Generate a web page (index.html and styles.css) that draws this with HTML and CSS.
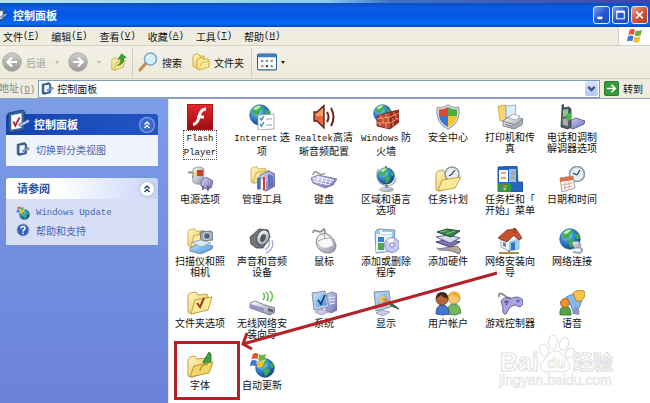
FILE: index.html
```html
<!DOCTYPE html>
<html lang="zh-CN">
<head>
  <meta charset="UTF-8" />
  <meta name="viewport" content="width=device-width, initial-scale=1.0"/>
  <title>控制面板</title>
  <link rel="stylesheet" href="styles.css">
</head>
<body>

<!-- Shared icon parts -->
<svg class="defs" aria-hidden="true">
  <defs>
    <radialGradient id="sea" cx="0.35" cy="0.3" r="0.8">
      <stop offset="0" stop-color="#a8e4fb"/><stop offset="0.45" stop-color="#2f86d0"/><stop offset="1" stop-color="#0b3478"/>
    </radialGradient>
    <linearGradient id="paper" x1="0" y1="0" x2="1" y2="1">
      <stop offset="0" stop-color="#fff9c4"/><stop offset="1" stop-color="#e9bd45"/>
    </linearGradient>
    <linearGradient id="metal" x1="0" y1="0" x2="1" y2="1">
      <stop offset="0" stop-color="#ffffff"/><stop offset="1" stop-color="#8e93a4"/>
    </linearGradient>
    <linearGradient id="lilac" x1="0" y1="0" x2="1" y2="1">
      <stop offset="0" stop-color="#dcdcfa"/><stop offset="1" stop-color="#6a68b4"/>
    </linearGradient>
    <linearGradient id="screen" x1="0" y1="0" x2="1" y2="1">
      <stop offset="0" stop-color="#c6e6ff"/><stop offset="1" stop-color="#3f8fe0"/>
    </linearGradient>
    <linearGradient id="red" x1="0" y1="0" x2="0" y2="1">
      <stop offset="0" stop-color="#e3262b"/><stop offset="1" stop-color="#9c0d10"/>
    </linearGradient>
    <linearGradient id="disc" x1="0" y1="0" x2="0" y2="1">
      <stop offset="0" stop-color="#cfcfcb"/><stop offset="1" stop-color="#979793"/>
    </linearGradient>
    <symbol id="globe" viewBox="0 0 20 20">
      <circle cx="10" cy="10" r="9.3" fill="url(#sea)" stroke="#2a5f95" stroke-width="0.7"/>
      <path d="M4 4Q7 1 11 1.5L13 4L10 6L9 9L6 10L3 8ZM8 11L13 10L15 13L12 17L10 18L9 14ZM14 5L18 6L18.5 10L16 10Z" fill="#3fae4c"/>
      <path d="M4 4Q7 1 11 1.5L9 4L6 6Z" fill="#b6efaa"/>
    </symbol>
    <symbol id="folder" viewBox="0 0 26 24">
      <path d="M1 21V4L3 2L9 1L11 4L20 3L21 5V18L4 23Z" fill="url(#paper)" stroke="#b58e2c" stroke-width="0.8"/>
      <path d="M4 23L8 9L25 6L21 19Z" fill="#fdeb98" stroke="#b58e2c" stroke-width="0.8"/>
    </symbol>
    <symbol id="panel" viewBox="0 0 24 24">
      <path d="M2 4L16 1L18 3V20L4 23L2 21Z" fill="#33639f" stroke="#16396f" stroke-width="0.8"/>
      <path d="M5 6L15 4V18L5 20Z" fill="#fff"/>
      <path d="M7 12L9 16L13 8" fill="none" stroke="#c3252b" stroke-width="1.8"/>
      <path d="M12 15L21 10L23 11L22 13L14 17Z" fill="#a8c8ee" stroke="#24497f" stroke-width="0.7"/>
    </symbol>
    <symbol id="panel-small" viewBox="0 0 24 24">
      <path d="M2 4L15 1L18 4V20L5 23L2 21Z" fill="#3b618f" stroke="#26466f"/>
      <path d="M6 6L15 5V18L6 19Z" fill="#eef5fc"/>
      <path d="M11 15L20 9L23 12L14 17Z" fill="#8fb1dc" stroke="#26466f"/>
    </symbol>
    <symbol id="flag" viewBox="0 0 20 18">
      <path d="M4 2Q7 0 10 2L8.700 8Q6 6 2.500 8Z" fill="#e8552b"/>
      <path d="M11 2.500Q14 4 18 2L16.500 8Q13 10 9.700 8.500Z" fill="#6db33a"/>
      <path d="M2.200 9.200Q5.500 7.500 8.400 9.300L7 15Q4 13.500 .8 15Z" fill="#3f78d8"/>
      <path d="M9.400 9.800Q12.500 11 16.200 9.300L14.600 15.500Q11 17.500 8 15.500Z" fill="#f5be2c"/>
    </symbol>
    <symbol id="chevrons" viewBox="0 0 14 14">
      <path d="M4.500 6.500L7 4L9.500 6.500M4.500 10L7 7.500L9.500 10" fill="none" stroke="currentColor" stroke-width="1.4"/>
    </symbol>
  </defs>
</svg>

<div class="window">
  <div class="backdrop"></div>

  <header class="title-bar">
    <svg class="title-icon"><use href="#panel-small"/></svg>
    <h1>控制面板</h1>
    <div class="window-buttons">
      <button type="button" aria-label="最小化"><svg viewBox="0 0 18 18"><path d="M4 12.500H10" stroke="#fff" stroke-width="3"/></svg></button>
      <button type="button" aria-label="最大化"><svg viewBox="0 0 18 18"><path d="M4.500 5V13.500H13.500V5" fill="none" stroke="#fff" stroke-width="1.300"/><path d="M4 5H14" stroke="#fff" stroke-width="2.600"/></svg></button>
      <button type="button" class="close" aria-label="关闭"><svg viewBox="0 0 18 18"><path d="M5 5L13 13M13 5L5 13" stroke="#fff" stroke-width="2"/></svg></button>
    </div>
  </header>

  <nav class="menu-bar">
    <div class="menus">
      <button type="button">文件<span class="en">(<u>F</u>)</span></button>
      <button type="button">编辑<span class="en">(<u>E</u>)</span></button>
      <button type="button">查看<span class="en">(<u>V</u>)</span></button>
      <button type="button">收藏<span class="en">(<u>A</u>)</span></button>
      <button type="button">工具<span class="en">(<u>T</u>)</span></button>
      <button type="button">帮助<span class="en">(<u>H</u>)</span></button>
    </div>
    <div class="flag-box"><svg><use href="#flag"/></svg></div>
  </nav>

  <div class="toolbar">
    <button type="button" class="back" disabled>
      <svg class="round" viewBox="0 0 20 20"><circle cx="10" cy="10" r="9.300" fill="url(#disc)" stroke="#a5a5a0" stroke-width="0.800"/><path d="M15 10H6M10 5.500L5.500 10L10 14.500" fill="none" stroke="#fff" stroke-width="2.200"/></svg>
      后退
    </button>
    <span class="caret off"></span>
    <button type="button" class="forward" aria-label="前进" disabled>
      <svg class="round" viewBox="0 0 20 20"><circle cx="10" cy="10" r="9.300" fill="url(#disc)" stroke="#a5a5a0" stroke-width="0.800"/><path d="M5 10H14M10 5.500L14.500 10L10 14.500" fill="none" stroke="#fff" stroke-width="2.200"/></svg>
    </button>
    <span class="caret off"></span>
    <button type="button" class="up" aria-label="向上">
      <svg viewBox="0 0 18 20"><path d="M1 18V7L6 5L8 7L14 6V15L4 19Z" fill="url(#paper)" stroke="#b99735" stroke-width="0.700"/><path d="M4 19L6 11L16 8L13 16Z" fill="#fdee9d" stroke="#b99735" stroke-width="0.700"/><path d="M7 14Q12 12 11 6L8 7L12 1L17 5L14 5.500Q15 13 7 14Z" fill="#35a52c" stroke="#1b7420" stroke-width="0.700"/></svg>
    </button>
    <span class="separator"></span>
    <button type="button" class="search">
      <svg class="round" viewBox="0 0 20 20"><path d="M8 11L2 18" stroke="#c98752" stroke-width="3" stroke-linecap="round"/><circle cx="12.500" cy="7" r="6" fill="#d4effd" stroke="#7da3ce" stroke-width="1.500"/><path d="M9 6Q10 3 13 3" fill="none" stroke="#fff" stroke-width="1.500"/></svg>
      搜索
    </button>
    <button type="button" class="folders">
      <svg viewBox="0 0 18 18"><path d="M1 13V3L3 1H6L8 3H12V11L4 15Z" fill="url(#paper)" stroke="#c09c37" stroke-width="0.800"/><path d="M5 16V7L9 4L11 6H16L17 8V14L7 17Z" fill="#fcea94" stroke="#c09c37" stroke-width="0.800"/><path d="M7 17L9 10L17 8" fill="none" stroke="#d7b54d" stroke-width="0.800"/></svg>
      文件夹
    </button>
    <span class="separator"></span>
    <button type="button" class="views" aria-label="查看">
      <svg viewBox="0 0 19 16"><rect x="0.500" y="0.500" width="18" height="15" rx="1" fill="#fff" stroke="#2e6098"/><path d="M1 2H18" stroke="#3e7cc4" stroke-width="3"/><g fill="#6d84b4"><path d="M4 6H6V8H4ZM13 6H15V8H13Z"/><path d="M8.500 6H10.500V8H8.500Z" fill="#69a15a"/><path d="M4 11H6V13H4Z" fill="#cc6650"/><path d="M8.500 11H10.500V13H8.500Z" fill="#28367a"/><path d="M13 11H15V13H13Z" fill="#4b9b51"/></g></svg>
      <span class="caret"></span>
    </button>
  </div>

  <form class="address-bar" onsubmit="return false;">
    <label for="address">地址<span class="en">(<u>D</u>)</span></label>
    <div class="address-box">
      <svg class="small-icon"><use href="#panel-small"/></svg>
      <input type="text" id="address" value="控制面板" />
      <button type="button" class="drop" aria-label="展开"><svg viewBox="0 0 12 12"><path d="M3 4.500L6 7.500L9 4.500" fill="none" stroke="#3f5583" stroke-width="2"/></svg></button>
    </div>
    <button type="submit" class="go">
      <svg viewBox="0 0 16 16"><rect x="0.500" y="0.500" width="15" height="15" rx="1.500" fill="#369a3c" stroke="#1d7228"/><path d="M3 8H12M8 4L12 8L8 12" fill="none" stroke="#fff" stroke-width="1.800"/></svg>
      转到
    </button>
  </form>

  <div class="content">
    <aside class="sidebar">
      <section class="box primary">
        <div class="box-head">
          <svg class="head-icon"><use href="#panel"/></svg>
          <h2>控制面板</h2>
          <button type="button" aria-label="收起"><svg><use href="#chevrons"/></svg></button>
        </div>
        <ul>
          <li><a href="#"><svg><use href="#panel-small"/></svg>切换到分类视图</a></li>
        </ul>
      </section>
      <section class="box">
        <div class="box-head">
          <h2>请参阅</h2>
          <button type="button" aria-label="收起"><svg><use href="#chevrons"/></svg></button>
        </div>
        <ul>
          <li><a href="#"><svg viewBox="0 0 14 14"><use href="#globe" x="3" y="3" width="11" height="11"/><use href="#flag" x="0" y="0" width="9" height="8"/></svg><span class="en">Windows Update</span></a></li>
          <li><a href="#"><svg viewBox="0 0 14 14"><circle cx="7" cy="7" r="6" fill="#2f5fb8" stroke="#8ba6d8"/><path d="M4.800 5.500Q5 3.500 7 3.500Q9.300 3.500 9 5.500Q8.800 6.500 7 7.500V8.500M7 9.500V11" fill="none" stroke="#fff" stroke-width="1.500"/></svg>帮助和支持</a></li>
        </ul>
      </section>
    </aside>

    <main class="pane">
      <div class="icons">
        <a href="#" class="item selected">
          <svg viewBox="0 0 26 26"><rect x="0.500" y="0.500" width="25" height="25" fill="url(#red)" stroke="#a31d1d"/><path d="M19 5Q13.500 5 12 13Q10.500 20 6 20.500M10 13H17" fill="none" stroke="#fff" stroke-width="3"/></svg>
          <span><span class="en">Flash<br>Player</span></span>
        </a>
        <a href="#" class="item">
          <svg viewBox="0 0 26 26"><use href="#globe" width="22" height="22"/><path d="M9 11L25 10V25L9 26Z" fill="#fff" stroke="#8d9cb0" stroke-width="0.800"/><path d="M11 14L12.500 16L15 12M11 20L12.500 22L15 18" fill="none" stroke="#2c87c0" stroke-width="1.300"/><path d="M17 15H23M17 21H23" stroke="#93a0b4"/></svg>
          <span><span class="en">Internet</span> 选<br>项</span>
        </a>
        <a href="#" class="item">
          <svg viewBox="0 0 26 26"><path d="M3 8H6L13 1.500V24L6 17H3Z" fill="#e6673e" stroke="#541b15" stroke-width="1.300"/><path d="M5 10L12 4V12H5Z" fill="#f49a70"/><path d="M16 8Q19 13 16 18M20 4Q25 13 20 22" fill="none" stroke="#6b2419" stroke-width="2"/></svg>
          <span><span class="en">Realtek</span>高清<br>晰音频配置</span>
        </a>
        <a href="#" class="item">
          <svg viewBox="0 0 26 26"><use href="#globe" x="0" y="0" width="19" height="19"/><path d="M4 12L17 8L26 6V18L17 25L4 22Z" fill="#c4482c" stroke="#6d1f12" stroke-width="0.800"/><path d="M17 8L26 6V18L17 25Z" fill="#962b19"/><path d="M4 15L17 13L26 9M4 19L17 19L26 14M8 11V15M13 10V14M10 15V19M15 13V19M7 19V22M13 19V24M21 8V11M23 11V15M20 14V22" fill="none" stroke="#efaa83" stroke-width="0.900"/></svg>
          <span><span class="en">Windows</span> 防<br>火墙</span>
        </a>
        <a href="#" class="item">
          <svg viewBox="0 0 26 26"><path d="M13 0.700Q17 4 24 3.500Q26 19 13 25.300Q0 19 2 3.500Q9 4 13 .7Z" fill="#d9dce0" stroke="#798088" stroke-width="0.800"/><path d="M13 3Q9 5.500 4 5.500L4 12H13Z" fill="#dd4930"/><path d="M13 3Q17 5.500 22 5.500L22 12H13Z" fill="#4cac40"/><path d="M4 12H13V23Q5 19 4 12Z" fill="#3978d2"/><path d="M22 12H13V23Q21 19 22 12Z" fill="#f3c42f"/></svg>
          <span>安全中心</span>
        </a>
        <a href="#" class="item">
          <svg viewBox="0 0 26 26"><path d="M1 2L9 1V16L3 17Z" fill="#f9d36b" stroke="#c69c38" stroke-width="0.700"/><path d="M9 2L19 1L18 13L9 14Z" fill="#d7eefb" stroke="#7e9fc0" stroke-width="0.800"/><path d="M6 17L13 12L26 15L25 21L17 25L6 22Z" fill="url(#metal)" stroke="#70747c" stroke-width="0.800"/><path d="M11 14L16 10L23 12L20 16Z" fill="#fff" stroke="#8b8f96" stroke-width="0.700"/><path d="M6 17L18 21L26 15M8 20L16 23" fill="none" stroke="#6c7078" stroke-width="0.800"/></svg>
          <span>打印机和传<br>真</span>
        </a>
        <a href="#" class="item">
          <svg viewBox="0 0 26 26"><path d="M8 18L17 14L26 17L25 20L14 25L7 22Z" fill="url(#lilac)" stroke="#514e8b" stroke-width="0.800"/><path d="M3 5V1L4.500 .5V4L10 3L12 5V23L9 25L2 23Z" fill="#535c62" stroke="#31393e" stroke-width="0.800"/><path d="M4 6L9 5L9 12L4 13Z" fill="#91c98d"/><path d="M3.500 15L9 14V22L4 21Z" fill="#a5acae"/><path d="M7 10L12 9V16L8 17Z" fill="#4ab447"/></svg>
          <span>电话和调制<br>解调器选项</span>
        </a>

        <a href="#" class="item">
          <svg viewBox="0 0 26 26"><path d="M1 7Q4 5 7 8L6 11L13 16L17 14" fill="none" stroke="#8f8fa8" stroke-width="2"/><path d="M6 3Q12-1 17 3L16 17Q11 20 6 16Z" fill="url(#metal)" stroke="#83838d" stroke-width="0.800"/><rect x="10" y="4" width="6" height="6" fill="#c8412c"/><rect x="7" y="5" width="3" height="5" fill="#e9d77c"/><path d="M14 15L19 11L26 15L24 22L19 23L14 20Z" fill="url(#lilac)" stroke="#5d5a90" stroke-width="0.800"/><path d="M16 20V24M21 20V25" stroke="#555283" stroke-width="1.500"/></svg>
          <span>电源选项</span>
        </a>
        <a href="#" class="item">
          <svg viewBox="0 0 26 26"><use href="#folder" width="22" height="18"/><path d="M11 9L20 5L26 8V20L17 25L11 22Z" fill="url(#lilac)" stroke="#55547c" stroke-width="0.800"/><path d="M8 12L11 11V24L8 23Z" fill="#347ecd"/><path d="M12 14L17 13V24L12 23Z" fill="#fafafa"/><path d="M14 11H16V24H14Z" fill="#d83d2b"/><path d="M19 8L24 10V20L19 22Z" fill="#6372b6"/></svg>
          <span>管理工具</span>
        </a>
        <a href="#" class="item">
          <svg viewBox="0 0 26 26"><path d="M2 9Q3 4 7 7T14 7" fill="none" stroke="#8f929a" stroke-width="1.500"/><path d="M0 12L7 9L26 13L22 19L14 22L2 17Z" fill="url(#lilac)" stroke="#696891" stroke-width="0.800"/><path d="M3 12.500L21 16.500M6 11L23 14.500M3 15L18 19M8 10L6 16M12 11L10 18M16 12L14 19M20 13L18 19" stroke="#fff" stroke-width="0.900"/></svg>
          <span>键盘</span>
        </a>
        <a href="#" class="item">
          <svg viewBox="0 0 26 26"><path d="M5 3Q1 16 13 20Q22 20 23 12" fill="none" stroke="#a3adb8" stroke-width="1.500"/><use href="#globe" x="4" y="1" width="18" height="18"/><path d="M12 19H15V22H12Z" fill="#828890"/><ellipse cx="13.500" cy="23.500" rx="7" ry="2" fill="url(#metal)" stroke="#858c94" stroke-width="0.700"/><path d="M12 0H14V2H12Z" fill="#697f96"/></svg>
          <span>区域和语言<br>选项</span>
        </a>
        <a href="#" class="item">
          <svg viewBox="0 0 26 26"><path d="M1 24V7L3 5L8 4L10 7H20V20L5 25Z" fill="url(#paper)" stroke="#b58e2c" stroke-width="0.800"/><circle cx="17" cy="8" r="7" fill="#e8eef2" stroke="#8c969f" stroke-width="1.500"/><path d="M17 8L20 4M17 8L14 10" stroke="#2d3b54" stroke-width="1.200"/><path d="M3 25L7 14L26 11L20 22Z" fill="#fdea97" stroke="#b58e2c" stroke-width="0.800"/></svg>
          <span>任务计划</span>
        </a>
        <a href="#" class="item">
          <svg viewBox="0 0 26 26"><path d="M1 1L20 0L21 16H26V26H1Z" fill="#2465c0" stroke="#194888" stroke-width="0.800"/><path d="M2 4H11V16H2Z" fill="#fff"/><path d="M12 3H19V16H12Z" fill="#8dbdec"/><path d="M4 7H9M4 12H9M14 7H18M14 12H18" stroke="#e8894b" stroke-width="1.500"/><path d="M1 17H14V26H1Z" fill="#32963c"/><use href="#flag" x="3" y="18" width="8" height="7"/></svg>
          <span>任务栏和「<br>开始」菜单</span>
        </a>
        <a href="#" class="item">
          <svg viewBox="0 0 26 26"><circle cx="18" cy="8" r="7.500" fill="#e5f0f8" stroke="#8a97a2" stroke-width="1.600"/><path d="M18 9L21 4M18 9L14 7" stroke="#27405f" stroke-width="1.300"/><path d="M1 12L14 10L16 22L3 26Z" fill="#fff" stroke="#8f8a88" stroke-width="0.800"/><path d="M1 12L14 10V14L1 16Z" fill="#df7046"/><path d="M3 19L14 17M3.500 22L14 20M6 16V24M10 15V23" stroke="#d0a499" stroke-width="0.900"/></svg>
          <span>日期和时间</span>
        </a>

        <a href="#" class="item">
          <svg viewBox="0 0 26 26"><use href="#folder" width="22" height="20"/><path d="M13 4L24 3L26 5V12L14 13Z" fill="#a2a9af" stroke="#5e666c" stroke-width="0.800"/><circle cx="20" cy="8" r="3.500" fill="#4f6680" stroke="#e1e5e7"/><path d="M3 20L13 15L26 18L25 21L14 26L3 23Z" fill="url(#screen)" stroke="#60799b" stroke-width="0.800"/><path d="M5 14L14 12L24 15L14 19Z" fill="#ddeaf5" stroke="#8095ad" stroke-width="0.700"/></svg>
          <span>扫描仪和照<br>相机</span>
        </a>
        <a href="#" class="item">
          <svg viewBox="0 0 26 26"><path d="M20 12Q22 18 16 22M23 12Q26 21 17 25" fill="none" stroke="#a9aee0" stroke-width="1.500"/><path d="M1 9L10 1L19 2L21 9L14 20L7 20L2 16Z" fill="#70757b" stroke="#41464c" stroke-width="0.800"/><ellipse cx="14" cy="9.500" rx="6" ry="8" transform="rotate(24 14 9.500)" fill="url(#metal)" stroke="#4c5158"/><ellipse cx="14" cy="10" rx="2.500" ry="4" transform="rotate(24 14 10)" fill="#51565d"/></svg>
          <span>声音和音频<br>设备</span>
        </a>
        <a href="#" class="item">
          <svg viewBox="0 0 26 26"><path d="M2 5Q2 1 6 3T12 2T14 7" fill="none" stroke="#8a8c90" stroke-width="1.700"/><path d="M6 10Q9 4 16 6Q22 8 25 17Q25 25 17 25Q8 25 5 15Z" fill="url(#metal)" stroke="#85878c"/><path d="M7 12Q11 5 17 8Q21 12 22 17Q15 22 9 18Z" fill="#fafafa"/><path d="M7 13Q12 10 19 10M13 6L14 11" fill="none" stroke="#a5a7ac"/></svg>
          <span>鼠标</span>
        </a>
        <a href="#" class="item">
          <svg viewBox="0 0 26 26"><path d="M2 4L5 1L22 2L20 23L3 25Z" fill="#9fcbea" stroke="#5f88ab" stroke-width="0.800"/><path d="M3 6L19 7L18 23L3 24Z" fill="#e7f3fa"/><path d="M5 9H11V14H5Z" fill="#3d7ec6"/><path d="M5 15H11V22H5Z" fill="#4ca753"/><path d="M8 2V5H19" stroke="#f8fcff" stroke-width="2" fill="none"/><circle cx="19" cy="17" r="7.500" fill="#c6c7f2" stroke="#7c7eb7" stroke-width="0.800"/><path d="M19 17L14 12Q18 9 21 11Z" fill="#fff"/><circle cx="19" cy="17" r="2" fill="#fff" stroke="#7c7eb7"/></svg>
          <span>添加或删除<br>程序</span>
        </a>
        <a href="#" class="item">
          <svg viewBox="0 0 26 26"><path d="M1 14L14 11L25 14L15 19Z" fill="#7e76b5" stroke="#444073"/><path d="M1 9L13 7L25 10L15 15Z" fill="#d7d9ed" stroke="#65658b"/><path d="M2 4L12 1L25 3L16 9Z" fill="#35834b" stroke="#1c4a2b"/><path d="M5 4L12 2.500M11 6L20 3" stroke="#8bc38e"/><path d="M3 21L15 19L22 18L26 22L24 26L17 23Z" fill="#b6aaa0" stroke="#625b58" stroke-width="0.800"/><path d="M2 20Q6 24 14 20" fill="none" stroke="#9996bd" stroke-width="2"/></svg>
          <span>添加硬件</span>
        </a>
        <a href="#" class="item">
          <svg viewBox="0 0 26 26"><path d="M4 11L15 7L22 12V21L12 23L4 19Z" fill="#f2f7fc" stroke="#8295ab" stroke-width="0.800"/><path d="M12 14L22 10V21L12 23Z" fill="#9cc9ee"/><path d="M1 10L10 2L19 1L25 10L22 12L17 7L10 14Z" fill="#c8532f" stroke="#7c2d1a" stroke-width="0.800"/><path d="M16 0H19V5H16Z" fill="#a7422c"/><path d="M14 15L18 14V22H14Z" fill="#3275bd"/><path d="M6 14L9 15V19L6 18Z" fill="#4e8acb"/><path d="M2 25H22M12 22V25" stroke="#a58b52" stroke-width="2"/></svg>
          <span>网络安装向<br>导</span>
        </a>
        <a href="#" class="item">
          <svg viewBox="0 0 26 26"><use href="#globe" width="22" height="22"/><path d="M13 14L19 13L22 17L20 20L15 20Z" fill="url(#metal)" stroke="#72839c" stroke-width="0.800"/><path d="M20 19Q26 22 21 25L14 24" fill="none" stroke="#96a8c2" stroke-width="2"/></svg>
          <span>网络连接</span>
        </a>

        <a href="#" class="item">
          <svg viewBox="0 0 26 26"><use href="#folder" y="1" width="26" height="24"/><path d="M10 13L13 17L17 8" fill="none" stroke="#a23721" stroke-width="2"/></svg>
          <span>文件夹选项</span>
        </a>
        <a href="#" class="item">
          <svg viewBox="0 0 26 26"><path d="M14 10Q17 6 14 3M18 11Q21 6 17 2M21 12Q26 6 21 1" fill="none" stroke="#67b956" stroke-width="1.500"/><path d="M1 13L6 11L16 15L26 18V22L21 25L1 18Z" fill="url(#metal)" stroke="#696d7e" stroke-width="0.800"/><path d="M1 14L15 18V22L1 18Z" fill="#9495bd"/><path d="M19 18L24 20V22L19 21Z" fill="#525774"/></svg>
          <span>无线网络安<br>装向导</span>
        </a>
        <a href="#" class="item">
          <svg viewBox="0 0 26 26"><path d="M16 4L21 2L26 4V20L20 23L15 20Z" fill="url(#lilac)" stroke="#6866a0" stroke-width="0.800"/><path d="M18 8L24 7M18 11L24 10M18 14L24 13" stroke="#eef"/><path d="M1 3L14 1L18 17L3 20Z" fill="#bfcbe0" stroke="#6c80a1" stroke-width="0.800"/><path d="M3 5L13 3L16 15L5 17Z" fill="url(#screen)"/><path d="M7 10L10 14L14 5" fill="none" stroke="#113c80" stroke-width="1.800"/><path d="M4 22L10 19L18 22L10 25Z" fill="#c9cde9" stroke="#8185aa" stroke-width="0.700"/></svg>
          <span>系统</span>
        </a>
        <a href="#" class="item">
          <svg viewBox="0 0 26 26"><path d="M3 23L9 20L17 22L10 26Z" fill="#c9cde9" stroke="#8185aa" stroke-width="0.700"/><path d="M1 2L16 1L18 17L3 21Z" fill="#b7c7dc" stroke="#6d7f99" stroke-width="0.800"/><path d="M3 4L14 3L15 15L5 18Z" fill="url(#screen)"/><path d="M6 11Q7 5 12 6L13 10L9 13Z" fill="#f0c35a"/><path d="M10 9L18 13" stroke="#e08742" stroke-width="3"/><path d="M17 12L26 19L18 16Z" fill="#428447" stroke="#235930"/></svg>
          <span>显示</span>
        </a>
        <a href="#" class="item">
          <svg viewBox="0 0 26 26"><path d="M12 24Q12 14 19 14Q25 14 26 23L20 25Z" fill="#74b45a" stroke="#397632" stroke-width="0.800"/><circle cx="19" cy="8" r="6" fill="#f5c573" stroke="#b17c2e" stroke-width="0.800"/><path d="M13 7Q15 1 20 2Q25 2 25 8Q20 7 17 4Z" fill="#edae36"/><path d="M1 24Q1 15 7 15Q14 15 14 24L8 25Z" fill="#4676cf" stroke="#264888" stroke-width="0.800"/><circle cx="7" cy="9" r="6" fill="#b76739" stroke="#5e2b1a" stroke-width="0.800"/><path d="M1 9Q1 2 7 2Q13 2 13 8Q8 8 6 5Z" fill="#3d2520"/></svg>
          <span>用户帐户</span>
        </a>
        <a href="#" class="item">
          <svg viewBox="0 0 26 26"><path d="M2 7Q1 2 5 4T9 7L14 8" fill="none" stroke="#858397" stroke-width="1.700"/><path d="M4 11Q7 6 13 9Q20 5 25 9Q28 14 23 17L18 15L13 17L9 24Q5 25 6 18Z" fill="#aaa5df" stroke="#605b9a" stroke-width="0.900"/><path d="M7 12H12M9.500 10V15" stroke="#5b5594" stroke-width="1.300"/><circle cx="21" cy="11" r="1.500" fill="#635aa5"/></svg>
          <span>游戏控制器</span>
        </a>
        <a href="#" class="item">
          <svg viewBox="0 0 26 26"><path d="M7 7L14 4L23 10L20 18L15 24L12 16Z" fill="#83b9ed" stroke="#4778ae" stroke-width="0.800"/><path d="M14 3Q18-1 25 1Q28 6 22 11L17 11Z" fill="#f3c449" stroke="#a87c28" stroke-width="0.800"/><path d="M16 16Q22 18 20 25L13 24Z" fill="#9191bf"/><path d="M1 25Q0 17 6 16Q12 16 12 25Z" fill="#54a348" stroke="#306e30" stroke-width="0.800"/><circle cx="6" cy="13" r="4.500" fill="#e89437" stroke="#985618" stroke-width="0.800"/></svg>
          <span>语音</span>
        </a>

        <a href="#" class="item marked">
          <svg viewBox="0 0 26 26"><path d="M1 24V7L3 5L8 4L10 7L20 6V20L5 25Z" fill="url(#paper)" stroke="#b58e2c" stroke-width="0.800"/><path d="M16 10L22 0L24 2V14L18 13Z" fill="#3ca044" stroke="#216a2b" stroke-width="0.800"/><path d="M3 25L7 14L26 10L22 21Z" fill="#f1d667" stroke="#a88324" stroke-width="0.800"/><path d="M13 19Q14 12 21 12" fill="none" stroke="#ba9938" stroke-width="1.500"/></svg>
          <span>字体</span>
        </a>
        <a href="#" class="item">
          <svg viewBox="0 0 26 26"><use href="#globe" x="6" y="6" width="20" height="20"/><use href="#flag" x="0" y="0" width="19" height="17"/></svg>
          <span>自动更新</span>
        </a>
      </div>

      <svg class="arrow" viewBox="0 0 262 90" aria-hidden="true">
        <path d="M260 7L6 78M10 67L6 78L15 83" fill="none" stroke="#b32226" stroke-width="3"/>
      </svg>

      <svg class="watermark" viewBox="0 0 120 58">
        <g fill="#fff" stroke="#dedede" stroke-width="1">
          <text x="2" y="38" font-size="25" class="mark">Bai</text>
          <ellipse cx="46" cy="17" rx="4.500" ry="6" transform="rotate(-20 46 17)"/>
          <ellipse cx="55" cy="9" rx="4.500" ry="7"/>
          <ellipse cx="66" cy="11" rx="4.500" ry="6.500" transform="rotate(15 66 11)"/>
          <ellipse cx="72" cy="20" rx="4" ry="5.500" transform="rotate(35 72 20)"/>
          <path d="M57 18Q62 17 66 24Q74 30 71 36Q68 40 58 38Q46 41 43 36Q41 30 48 25Q52 18 57 18Z"/>
          <text x="49" y="35" font-size="15" class="mark" stroke-width="0.700">du</text>
          <text x="75" y="37" font-size="20" class="mark">经验</text>
          <text x="1" y="52" font-size="14" class="site">jingyan.baidu.com</text>
        </g>
      </svg>
    </main>
  </div>
</div>

</body>
</html>
```
FILE: styles.css
```css
* { box-sizing: border-box; margin: 0; padding: 0; }

body {
  font-family: "Noto Sans CJK SC", sans-serif;
  font-size: 10px;
  line-height: 11px;
  color: #111;
  background: #fff;
}

button, input {
  font: inherit;
  color: inherit;
  border: none;
  background: none;
}

button {
  display: flex;
  align-items: center;
}

a {
  color: inherit;
  text-decoration: none;
}

svg {
  display: block;
  flex: none;
}

.defs {
  position: absolute;
  width: 0;
  height: 0;
}

.en {
  font-family: "Liberation Mono", monospace;
  font-size: 9px;
}

.window {
  display: flex;
  flex-direction: column;
  height: 100vh;
  overflow: hidden;
}

.backdrop {
  height: 3px;
  background: linear-gradient(to right, #b4e3f8, #8ccdf0 50%, #3f72c8 60%, #3f45a8);
}

/* Title bar */
.title-bar {
  display: flex;
  align-items: center;
  height: 24px;
  padding-right: 2px;
  background: linear-gradient(to bottom, #0a4fc0, #0a5de8 25%, #0355e2 50%, #0866fb 85%, #0348c4);
  color: #fff;
}

.title-icon {
  width: 14px;
  height: 14px;
  margin-left: -6px;
}

.title-bar h1 {
  flex: 1;
  padding-left: 5px;
  font-size: 11px;
  font-weight: 700;
}

.window-buttons {
  display: flex;
  gap: 2px;
}

.window-buttons button {
  width: 17px;
  height: 18px;
  border: 1px solid #dfe9fb;
  border-radius: 3px;
  background: linear-gradient(135deg, #7c9ff0, #2557d4 50%, #1b49c0);
}

.window-buttons .close {
  background: linear-gradient(135deg, #eaa08b, #d75438 50%, #b8391e);
}

.window-buttons svg {
  width: 15px;
  height: 16px;
}

/* Menu bar */
.menu-bar {
  display: flex;
  height: 19px;
  background: #efede0;
  border-bottom: 1px solid #d5d2c3;
}

.menus {
  display: flex;
  flex: 1;
  gap: 12px;
  padding-left: 3px;
}

.flag-box {
  display: flex;
  align-items: center;
  justify-content: center;
  width: 32px;
  background: #fff;
  border-left: 1px solid #d5d2c3;
}

.flag-box svg {
  width: 18px;
  height: 16px;
}

/* Toolbar */
.toolbar {
  display: flex;
  align-items: center;
  height: 33px;
  padding-left: 2px;
  background: linear-gradient(to bottom, #f3f1e8, #edead9);
  border-bottom: 1px solid #d5d2c3;
}

.toolbar svg {
  width: 18px;
  height: 18px;
}

.toolbar .round {
  width: 20px;
  height: 20px;
}

.toolbar button { gap: 4px; }

.back { color: #a5a398; }

.caret {
  border: 2px solid transparent;
  border-top: 3px solid #222;
  border-bottom: none;
}

.caret.off {
  margin: 0 9px;
  border-top-color: #bab8ad;
}

.separator {
  width: 1px;
  height: 28px;
  margin: 0 5px 0 4px;
  background: #cfccbc;
}

.folders { margin: 0 3px 0 10px; }

.toolbar .views svg {
  width: 20px;
}

/* Address bar */
.address-bar {
  display: flex;
  align-items: center;
  gap: 3px;
  height: 20px;
  padding-right: 7px;
  background: #efecdf;
  border-bottom: 1px solid #8ea3c0;
}

.address-bar label {
  margin-left: -1px;
  color: #85847c;
}

.address-box {
  display: flex;
  flex: 1;
  align-items: center;
  height: 18px;
  padding: 0 1px 0 2px;
  background: #fff;
  border: 1px solid #809db9;
}

.small-icon {
  width: 13px;
  height: 13px;
}

.address-box input {
  flex: 1;
  min-width: 0;
  height: 14px;
  padding-left: 3px;
  outline: none;
}

.drop {
  width: 13px;
  height: 15px;
  background: linear-gradient(to bottom, #dbe5fd, #b0c5f5);
  border-radius: 2px;
}

.drop svg {
  width: 13px;
  height: 13px;
}

.go {
  gap: 4px;
  padding-left: 1px;
}

.go svg {
  width: 15px;
  height: 15px;
}

/* Sidebar */
.content {
  display: flex;
  flex: 1;
  min-height: 0;
}

.sidebar {
  display: flex;
  flex-direction: column;
  gap: 12px;
  width: 169px;
  padding: 15px 10px 0 6px;
  background: linear-gradient(to bottom, #7c9de6, #6a82d9);
  border-right: 1px solid #dfe7fb;
}

.box-head {
  position: relative;
  display: flex;
  align-items: center;
  height: 21px;
  padding: 0 4px 0 11px;
  color: #2450a8;
  background: linear-gradient(to right, #fff 35%, #c8d4f7);
  border-radius: 3px 3px 0 0;
}

.box-head h2 {
  flex: 1;
  font-size: 11px;
  font-weight: 700;
}

.box-head button {
  width: 14px;
  height: 14px;
  color: #27365c;
  background: #fff;
  border-radius: 50%;
  box-shadow: 0 0 1px 1px #b3c0e2;
}

.box-head button svg {
  width: 14px;
  height: 14px;
}

.primary .box-head {
  padding-left: 28px;
  color: #fff;
  background: linear-gradient(to right, #1545b4, #2454c4);
}

.primary .box-head button {
  color: #fff;
  background: #3d69cf;
  box-shadow: 0 0 0 1px #91ace6;
}

.head-icon {
  position: absolute;
  left: 0;
  bottom: 1px;
  width: 25px;
  height: 25px;
}

.box ul {
  display: flex;
  flex-direction: column;
  gap: 3px;
  padding: 7px 10px 8px;
  list-style: none;
  color: #3f66b4;
  background: #d9def7;
}

.primary ul {
  height: 31px;
  background: #f0f4fd;
}

.box li a {
  display: flex;
  align-items: center;
  gap: 6px;
  height: 14px;
}

.box li svg {
  width: 14px;
  height: 14px;
}

/* Icon pane */
.pane {
  position: relative;
  flex: 1;
  min-width: 0;
  overflow: hidden;
  background: #fff;
}

.icons {
  display: grid;
  grid-template-columns: repeat(auto-fill, 62px);
  grid-auto-rows: 62px;
  padding-top: 5px;
}

.item {
  position: relative;
  display: flex;
  flex-direction: column;
  align-items: center;
  gap: 1px;
  text-align: center;
  white-space: nowrap;
}

.item > svg {
  width: 26px;
  height: 26px;
}

.selected > span {
  outline: 1px dotted #555;
}

.marked::after {
  content: "";
  position: absolute;
  top: -11px;
  left: 5px;
  width: 60px;
  height: 53px;
  border: 3px solid #b32226;
}

.arrow {
  position: absolute;
  top: 167px;
  left: 68px;
  width: 262px;
  height: 90px;
}

.watermark {
  position: absolute;
  right: 32px;
  bottom: 12px;
  width: 120px;
  height: 58px;
}

.mark {
  font-family: "Liberation Sans", "Noto Sans CJK SC", sans-serif;
  font-weight: 700;
}

.site {
  font-family: "Liberation Sans", sans-serif;
  stroke-width: 0.6px;
}
```
